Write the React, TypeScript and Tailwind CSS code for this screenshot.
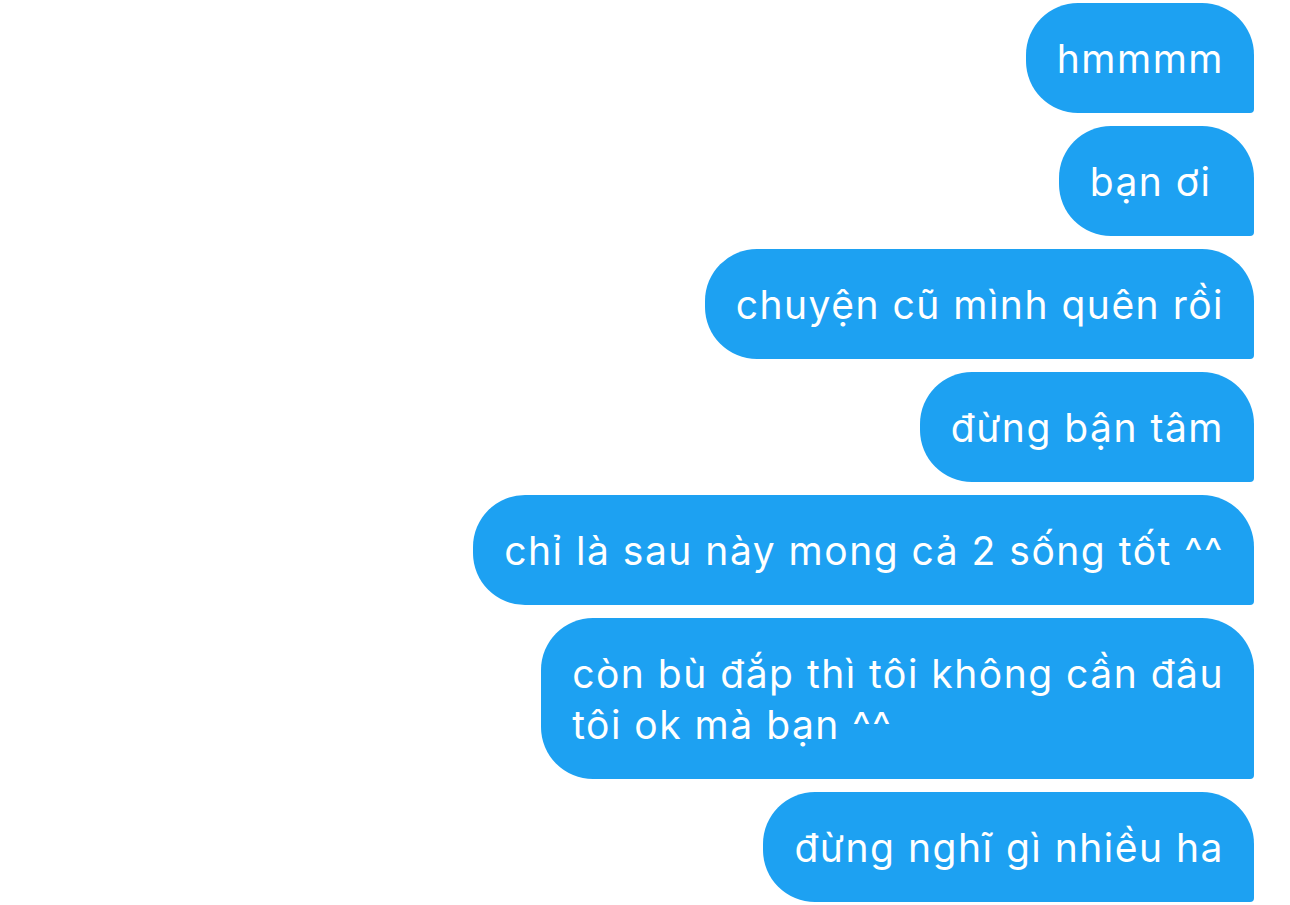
const messages: string[][] = [
  ["hmmmm"],
  ["bạn ơi "],
  ["chuyện cũ mình quên rồi"],
  ["đừng bận tâm"],
  ["chỉ là sau này mong cả 2 sống tốt ^^"],
  ["còn bù đắp thì tôi không cần đâu", "tôi ok mà bạn ^^"],
  ["đừng nghĩ gì nhiều ha"],
];

export default function App() {
  return (
    <div className="min-h-screen bg-white pt-[3px] pr-[36px] font-['Inter',sans-serif]">
      <div className="flex flex-col items-end gap-[13px]">
        {messages.map((lines, i) => (
          <div
            key={i}
            className="bg-[#1da1f2] text-white text-[39px] leading-[51px] tracking-[1.5px] whitespace-pre pl-[31px] pr-[30px] pt-[30px] pb-[29px] rounded-tl-[52px] rounded-tr-[52px] rounded-bl-[52px] rounded-br-[4px]"
          >
            {lines.map((line, j) => (
              <div key={j}>{line}</div>
            ))}
          </div>
        ))}
      </div>
    </div>
  );
}
